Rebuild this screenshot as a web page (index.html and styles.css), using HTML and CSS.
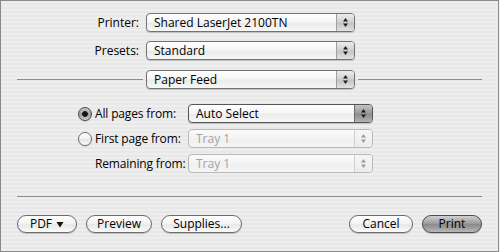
FILE: index.html
```html
<!DOCTYPE html>
<html lang="en">
<head>
    <meta charset="UTF-8">
    <title>Print</title>
    <link rel="stylesheet" href="styles.css">
</head>
<body>
    <div class="window">
        <!-- printer and presets -->
        <div class="fields">
            <div class="field-row">
                <label class="field-label">Printer:</label>
                <div class="popup">
                    <span class="popup-text">Shared LaserJet 2100TN</span>
                    <span class="popup-arrows"><svg width="7" height="11" viewBox="0 0 7 11"><path d="M3.5 1 L6 4.5 L1 4.5 Z M1 6.5 L6 6.5 L3.5 10 Z"/></svg></span>
                </div>
            </div>
            <div class="field-row">
                <label class="field-label">Presets:</label>
                <div class="popup">
                    <span class="popup-text">Standard</span>
                    <span class="popup-arrows"><svg width="7" height="11" viewBox="0 0 7 11"><path d="M3.5 1 L6 4.5 L1 4.5 Z M1 6.5 L6 6.5 L3.5 10 Z"/></svg></span>
                </div>
            </div>
            <div class="section-row">
                <div class="rule rule-left"></div>
                <div class="popup">
                    <span class="popup-text">Paper Feed</span>
                    <span class="popup-arrows"><svg width="7" height="11" viewBox="0 0 7 11"><path d="M3.5 1 L6 4.5 L1 4.5 Z M1 6.5 L6 6.5 L3.5 10 Z"/></svg></span>
                </div>
                <div class="rule"></div>
            </div>
        </div>

        <!-- paper source options -->
        <div class="options">
            <span class="radio on"></span>
            <span class="opt-label">All pages from:</span>
            <div class="popup popup-wide popup-focus">
                <span class="popup-text">Auto Select</span>
                <span class="popup-arrows"><svg width="7" height="11" viewBox="0 0 7 11"><path d="M3.5 1 L6 4.5 L1 4.5 Z M1 6.5 L6 6.5 L3.5 10 Z"/></svg></span>
            </div>

            <span class="radio"></span>
            <span class="opt-label">First page from:</span>
            <div class="popup popup-wide disabled">
                <span class="popup-text">Tray 1</span>
                <span class="popup-arrows"><svg width="7" height="11" viewBox="0 0 7 11"><path d="M3.5 1 L6 4.5 L1 4.5 Z M1 6.5 L6 6.5 L3.5 10 Z"/></svg></span>
            </div>

            <span></span>
            <span class="opt-label">Remaining from:</span>
            <div class="popup popup-wide disabled">
                <span class="popup-text">Tray 1</span>
                <span class="popup-arrows"><svg width="7" height="11" viewBox="0 0 7 11"><path d="M3.5 1 L6 4.5 L1 4.5 Z M1 6.5 L6 6.5 L3.5 10 Z"/></svg></span>
            </div>
        </div>

        <div class="bottom-rule"></div>

        <!-- buttons -->
        <div class="buttons">
            <div class="btn-group">
                <button class="btn btn-pdf">PDF<svg class="pdf-arrow" width="8" height="7" viewBox="0 0 8 7"><path d="M0.5 1 L7.5 1 L4 6.5 Z"/></svg></button>
                <button class="btn btn-preview">Preview</button>
                <button class="btn btn-supplies">Supplies...</button>
            </div>
            <div class="btn-group">
                <button class="btn btn-cancel">Cancel</button>
                <button class="btn btn-print">Print</button>
            </div>
        </div>
    </div>
</body>
</html>
```

FILE: styles.css
```css
*{
    margin: 0;
    padding: 0;
    box-sizing: border-box;
}
body {
    background: #f4f4f4;
    font-family: "Open Sans", "DejaVu Sans", sans-serif;
    font-size: 12px;
    color: #000;
}
.window {
    width: 499px;
    height: 252px;
    border: 1px solid #8a8a8a;
    background: repeating-linear-gradient(#eeeeee 0, #eeeeee 2px, #e8e8e8 2px, #e8e8e8 4px);
    padding: 12px 16px 0 16px;
    display: flex;
    flex-direction: column;
}
.fields {
    display: flex;
    flex-direction: column;
    gap: 9px;
}
.field-row {
    display: flex;
    align-items: center;
    gap: 7px;
}
.field-label {
    width: 122px;
    text-align: right;
}
.section-row {
    display: flex;
    align-items: center;
    gap: 3px;
    margin-top: 1px;
}
.rule {
    flex: 1;
    height: 1px;
    background: #8c8c8c;
}
.rule-left {
    flex: 0 0 126px;
}

/* popup menus */
.popup {
    width: 209px;
    height: 19px;
    display: flex;
    border: 1px solid #727272;
    border-radius: 4px;
    background: linear-gradient(#ffffff, #f6f6f6 45%, #ebebeb 55%, #f7f7f7);
    box-shadow: 0 1px 1px rgba(0,0,0,0.18);
    overflow: hidden;
}
.popup-text {
    flex: 1;
    padding-left: 7px;
    line-height: 17px;
    white-space: nowrap;
}
.popup-arrows {
    width: 18px;
    border-left: 1px solid #a0a0a0;
    background: linear-gradient(#ececec, #d2d2d2 45%, #c4c4c4 55%, #e2e2e2);
    display: flex;
    align-items: center;
    justify-content: center;
}
.popup-arrows svg {
    fill: #1e1e1e;
}
.popup-wide {
    width: 185px;
}
.popup-focus {
    border-color: #555;
}
.popup-focus .popup-arrows {
    border-left-color: #6c6c6c;
    background: linear-gradient(#c4c4c4, #9c9c9c 45%, #8c8c8c 55%, #b4b4b4);
}
.disabled {
    border-color: #b8b8b8;
    box-shadow: none;
    background: linear-gradient(#fbfbfb, #f3f3f3 50%, #efefef 51%, #f5f5f5);
}
.disabled .popup-text {
    color: #a4a4a4;
}
.disabled .popup-arrows {
    border-left-color: #d0d0d0;
    background: linear-gradient(#f6f6f6, #ececec);
}
.disabled .popup-arrows svg {
    fill: #9c9c9c;
}

/* paper source */
.options {
    display: grid;
    grid-template-columns: 17px 93px 185px;
    row-gap: 6px;
    align-items: center;
    margin-top: 15px;
    padding-left: 61px;
}
.opt-label {
    letter-spacing: -0.15px;
}
.radio {
    width: 14px;
    height: 14px;
    border-radius: 50%;
    border: 1px solid #6e6e6e;
    background: linear-gradient(#ffffff, #f0f0f0 50%, #e4e4e4 51%, #fafafa);
    box-shadow: 0 1px 1px rgba(0,0,0,0.15);
}
.radio.on {
    border-color: #4a4a4a;
    background: radial-gradient(circle, #141414 0, #141414 2.5px, transparent 3.2px), linear-gradient(#c6c6c6, #a4a4a4 50%, #9a9a9a 51%, #d0d0d0);
}
.bottom-rule {
    height: 1px;
    background: #8c8c8c;
    margin-top: 23px;
}

/* push buttons */
.buttons {
    display: flex;
    justify-content: space-between;
    margin-top: 18px;
}
.btn-group {
    display: flex;
    gap: 9px;
}
.btn {
    height: 18px;
    border: 1px solid #6c6c6c;
    border-radius: 9px;
    font-family: "Open Sans", "DejaVu Sans", sans-serif;
    font-size: 12px;
    line-height: 16px;
    color: #000;
    background: linear-gradient(#ffffff, #f5f5f5 45%, #e8e8e8 55%, #fbfbfb);
    box-shadow: 0 1px 1px rgba(0,0,0,0.2);
}
.btn-pdf {
    width: 60px;
    display: flex;
    align-items: center;
    justify-content: center;
    gap: 4px;
}
.pdf-arrow {
    fill: #111;
}
.btn-preview { width: 66px; }
.btn-supplies { width: 81px; }
.btn-cancel { width: 64px; }
.btn-print {
    width: 60px;
    border-color: #4e4e4e;
    background: linear-gradient(#d0d0d0, #9e9e9e 45%, #8a8a8a 55%, #b8b8b8);
}
```
